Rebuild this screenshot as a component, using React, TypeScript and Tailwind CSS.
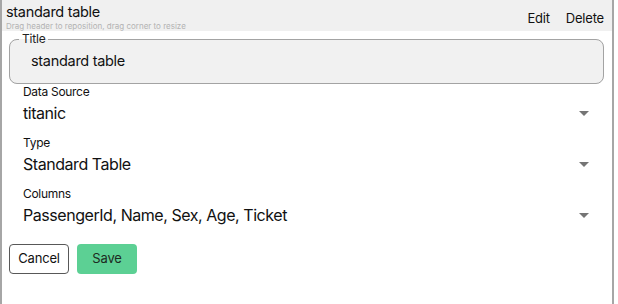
import React from "react";

const fields = [
  { label: "Data Source", value: "titanic" },
  { label: "Type", value: "Standard Table" },
  { label: "Columns", value: "PassengerId, Name, Sex, Age, Ticket" },
];

const Caret = () => (
  <svg width="10" height="5" viewBox="0 0 10 5" className="shrink-0">
    <path d="M0 0h10L5 5z" fill="#757575" />
  </svg>
);

const App = () => {
  return (
    <div
      className="w-[614px] h-[304px] border-l-2 border-r-2 border-[#a6a6a6] bg-white text-[#111] overflow-hidden"
      style={{ fontFamily: "Inter, 'Noto Sans', sans-serif" }}
    >
      {/* header */}
      <div className="h-[31px] bg-[#f0f0f0] flex justify-between px-[4px]">
        <div className="flex flex-col">
          <span className="text-[14.5px] leading-[18px] mt-[3px] tracking-[-0.3px]">standard table</span>
          <span className="text-[8px] leading-[10px] text-[#b3b3b3]">
            Drag header to reposition, drag corner to resize
          </span>
        </div>
        <div className="flex gap-[16px] text-[13px] leading-[16px] mt-[4px] pr-[4px] tracking-[-0.2px]">
          <button>Edit</button>
          <button>Delete</button>
        </div>
      </div>

      {/* form */}
      <div className="px-[7px] pr-[8px]">
        <fieldset className="border border-[#a3a3a3] rounded-[8px] bg-[#f1f1f1] px-[9px] pb-[13px] pt-[6px] mt-[1px]">
          <legend className="text-[12px] leading-[14px] px-[3px] text-[#222] tracking-[-0.2px]">Title</legend>
          <div className="text-[14.5px] leading-[18px] px-[12px] tracking-[-0.3px]">standard table</div>
        </fieldset>

        <div className="flex flex-col gap-[13px] pl-[14px] pr-[15px] mt-[1px]">
          {fields.map((f) => (
            <div key={f.label} className="flex flex-col gap-[4px]">
              <span className="text-[12px] leading-[14px] tracking-[-0.3px]">{f.label}</span>
              <div className="flex items-center justify-between">
                <span className="text-[16px] leading-[20px] tracking-[-0.45px]">{f.value}</span>
                <Caret />
              </div>
            </div>
          ))}
        </div>

        <div className="flex gap-[8px] mt-[19px]">
          <button className="w-[60px] h-[30px] border border-[#585858] rounded-[4px] text-[13px] bg-white tracking-[-0.2px]">
            Cancel
          </button>
          <button className="w-[60px] h-[30px] rounded-[4px] text-[13px] bg-[#5cd094] text-[#1d2b22] tracking-[-0.2px]">
            Save
          </button>
        </div>
      </div>
    </div>
  );
};

export default App;
